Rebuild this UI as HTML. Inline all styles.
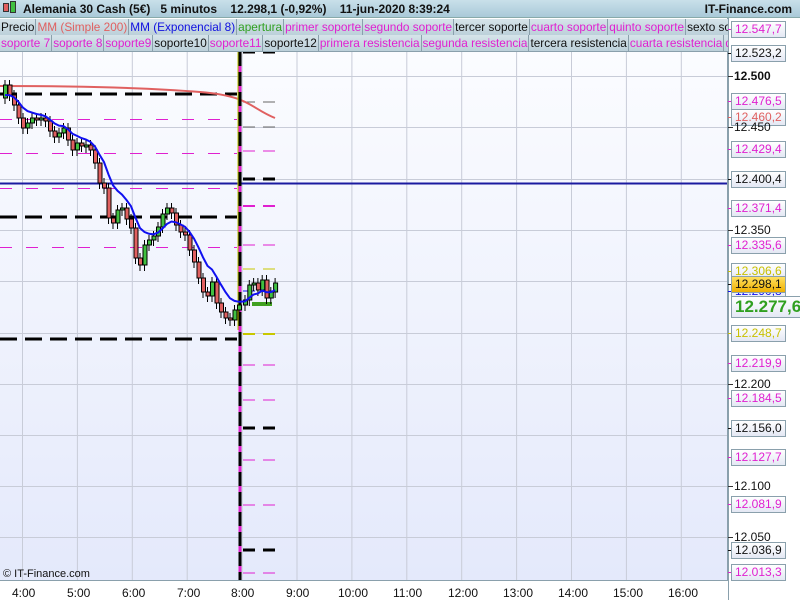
<!DOCTYPE html>
<html><head><meta charset="utf-8"><style>
*{margin:0;padding:0;box-sizing:border-box}
body{width:800px;height:600px;overflow:hidden;font-family:"Liberation Sans",sans-serif;background:#fff;position:relative}
#hdr{position:absolute;left:0;top:0;width:800px;height:18px;background:linear-gradient(#c9e0ea,#a9c9d8);font-weight:bold;font-size:12px;line-height:18px;color:#111;border-bottom:1px solid #8aa}
#hdr span{position:absolute;top:0;white-space:nowrap}
.row{position:absolute;left:0;height:17px;width:730px;background:#c4d6df;display:flex;overflow:hidden}
.row div{font-size:11.8px;line-height:16px;padding:0 1px;border-right:1px solid #8aa0ac;border-bottom:1px solid #8aa0ac;white-space:nowrap;background:linear-gradient(#d6e4ea,#bcd0da);flex-shrink:0}
.m{color:#e020d0}.k{color:#111}
#ax{position:absolute;left:728px;top:18px;width:72px;height:582px;background:#fff;border-left:1px solid #8aa0ac}
.lb{position:absolute;left:731px;height:17px;font-size:12px;line-height:15px;padding:0 3px;border:1px solid #8aa0ac;background:linear-gradient(#fff,#e4e8f4);white-space:nowrap}
.pl{position:absolute;left:734px;font-size:12px;color:#111}
.tk{position:absolute;left:728px;width:5px;height:1px;background:#333}
.t{position:absolute;top:586px;font-size:12px;color:#111}
</style></head><body>
<svg width="800" height="600" style="position:absolute;left:0;top:0">
<defs><linearGradient id="bg" x1="0" y1="0" x2="0" y2="1"><stop offset="0" stop-color="#fbfcff"/><stop offset="1" stop-color="#e4e9fb"/></linearGradient></defs>
<rect x="0" y="52" width="728" height="528" fill="url(#bg)"/>
<g id="grid" stroke="#c8ccd8" stroke-width="1"></g>
<g id="lines"></g>
<path d="M0 86 C80 86 150 88 200 92 S250 108 275 118" stroke="#e06060" stroke-width="2" fill="none"/>
<line x1="0" y1="183.5" x2="728" y2="183.5" stroke="#1a1aa0" stroke-width="2"/>
<line x1="240" y1="52" x2="240" y2="580" stroke="#e020d0" stroke-width="3"/>
<line x1="240" y1="52" x2="240" y2="580" stroke="#000" stroke-width="3" stroke-dasharray="14 6"/>
<line x1="238" y1="52" x2="238" y2="330" stroke="#b8c000" stroke-width="1"/>
<g id="c"></g>
<path id="ema" stroke="#1010f0" stroke-width="2" fill="none"/>
<line x1="727.5" y1="18" x2="727.5" y2="580" stroke="#8aa0ac"/>
<line x1="0" y1="580.5" x2="728" y2="580.5" stroke="#8aa0ac"/>
</svg>
<div id="hdr"><span style="left:3px;top:3px;width:6px;height:9px;background:#e06060;border:1px solid #333"></span><span style="left:10px;top:1px;width:6px;height:12px;background:#40c040;border:1px solid #333"></span><span style="left:23px">Alemania 30 Cash (5€)&nbsp;&nbsp;&nbsp;5 minutos&nbsp;&nbsp;&nbsp;&nbsp;12.298,1 (-0,92%)&nbsp;&nbsp;&nbsp;&nbsp;11-jun-2020 8:39:24</span><span style="right:8px">IT-Finance.com</span></div>
<div class="row" style="top:19px"><div class="k">Precio</div><div style="color:#e06060">MM (Simple 200)</div><div style="color:#1010e0">MM (Exponencial 8)</div><div style="color:#30a020">apertura</div><div class="m">primer soporte</div><div class="m">segundo soporte</div><div class="k">tercer soporte</div><div class="m">cuarto soporte</div><div class="m">quinto soporte</div><div class="k">sexto soporte</div></div>
<div class="row" style="top:35px"><div class="m">soporte 7</div><div class="m">soporte 8</div><div class="m">soporte9</div><div class="k">soporte10</div><div class="m">soporte11</div><div class="k">soporte12</div><div class="m">primera resistencia</div><div class="m">segunda resistencia</div><div class="k">tercera resistencia</div><div class="m">cuarta resistencia</div><div class="m">quinta resistencia</div></div>
<div id="ax" style="top:18px"></div>
<div id="lbl"></div>
<div style="position:absolute;left:3px;top:568px;font-size:11px;color:#111">© IT-Finance.com</div>
<div class="t" style="left:12px">4:00</div><div class="t" style="left:67px">5:00</div><div class="t" style="left:122px">6:00</div><div class="t" style="left:177px">7:00</div><div class="t" style="left:231px">8:00</div><div class="t" style="left:286px">9:00</div><div class="t" style="left:338px">10:00</div><div class="t" style="left:393px">11:00</div><div class="t" style="left:448px">12:00</div><div class="t" style="left:503px">13:00</div><div class="t" style="left:558px">14:00</div><div class="t" style="left:613px">15:00</div><div class="t" style="left:668px">16:00</div>
<script>
var NS="http://www.w3.org/2000/svg";
function el(p,t,a){var e=document.createElementNS(NS,t);for(var k in a)e.setAttribute(k,a[k]);p.appendChild(e);return e}
var g=document.getElementById('grid');
for(var i=0;i<13;i++){var x=22.5+i*54.9;el(g,'line',{x1:x,y1:52,x2:x,y2:580})}
[76,127,179,230,281,333,384,435,486,537].forEach(function(y){el(g,'line',{x1:0,y1:y+.5,x2:728,y2:y+.5})});
var L=document.getElementById('lines');
[94,217,339].forEach(function(y){el(L,'line',{x1:0,y1:y,x2:237,y2:y,stroke:'#000','stroke-width':3,'stroke-dasharray':'17 8'})});
[119,153,188,247].forEach(function(y){el(L,'line',{x1:0,y1:y+.5,x2:237,y2:y+.5,stroke:'#e020d0','stroke-width':1,'stroke-dasharray':'12 14'})});
var segs=[[52,'#000',3],[179,'#000',3],[428,'#000',3],[550,'#000',3],[102,'#666',1],[127,'#666',1],[151,'#e020d0',1],[206,'#e020d0',2],[245,'#e020d0',1],[365,'#e020d0',1],[400,'#e020d0',1],[460,'#e020d0',1],[505,'#e020d0',1],[573,'#e020d0',1],[269,'#c8c800',1],[334,'#c8c800',2],[291,'#1010f0',1]];
segs.forEach(function(s){el(L,'line',{x1:243,y1:s[0],x2:275,y2:s[0],stroke:s[1],'stroke-width':s[2],'stroke-dasharray':'12 8'})});
el(L,'line',{x1:252,y1:304,x2:272,y2:304,stroke:'#40a020','stroke-width':4});
var cl=[98,85,95,105,118,128,123,118,119,118,121,131,137,133,128,140,150,143,146,145,150,163,183,188,218,223,210,208,219,228,258,265,245,240,236,227,214,208,213,225,232,235,250,262,278,292,296,282,303,312,318,320,310,305];
var n=cl.length-1,sp=234/(n-1),C=document.getElementById('c'),pts=[],e=cl[0];
function candle(x,o,c){var top=Math.min(o,c),h=Math.max(2,Math.abs(o-c));el(C,'line',{x1:x+2,y1:top-5,x2:x+2,y2:top+h+6,stroke:'#000'});el(C,'rect',{x:x+.5,y:top,width:4,height:h,fill:c<o?'#40c040':'#e06060',stroke:'#000','stroke-width':1})}
for(var i=1;i<=n;i++){var x=3+(i-1)*sp;candle(x,cl[i-1],cl[i]);e=e+(cl[i]-e)*2/9;pts.push((x+2).toFixed(1)+' '+e.toFixed(1))}
var c2=[305,300,285,283,290,280,298,292,283];
for(var i=1;i<c2.length;i++){var x=243+(i-1)*4.3;candle(x,c2[i-1],c2[i]);e=e+(c2[i]-e)*2/9;pts.push((x+2).toFixed(1)+' '+e.toFixed(1))}
document.getElementById('ema').setAttribute('d','M'+pts.join(' L'));
var lb=document.getElementById('lbl');
var labs=[[29,'12.547,7','#e020d0'],[53,'12.523,2','#111'],[101,'12.476,5','#e020d0'],[117,'12.460,2','#e06060'],[149,'12.429,4','#e020d0'],[179,'12.400,4','#111'],[208,'12.371,4','#e020d0'],[245,'12.335,6','#e020d0'],[271,'12.306,6','#c8c000'],[291,'12.290,8','#1010f0'],[284,'12.298,1','#111','#f8c000'],[333,'12.248,7','#c8c000'],[363,'12.219,9','#e020d0'],[398,'12.184,5','#e020d0'],[428,'12.156,0','#111'],[457,'12.127,7','#e020d0'],[504,'12.081,9','#e020d0'],[550,'12.036,9','#111'],[572,'12.013,3','#e020d0']];
var h='';
labs.forEach(function(l){h+='<div class="tk" style="top:'+l[0]+'px;background:'+l[2]+'"></div><div class="lb" style="top:'+(l[0]-8)+'px;color:'+l[2]+(l[3]?';background:linear-gradient(#ffe060,#f0b000)':'')+'">'+l[1]+'</div>'});
h+='<div class="lb" style="top:296px;height:22px;font-size:17px;line-height:20px;font-weight:bold;color:#30a020">12.277,6</div>';
[[76,'12.500'],[127,'12.450'],[230,'12.350'],[384,'12.200'],[486,'12.100'],[537,'12.050']].forEach(function(l){h+='<div class="tk" style="top:'+l[0]+'px"></div><div class="pl" style="top:'+(l[0]-7)+'px;'+(l[0]==76?'font-weight:bold':'')+'">'+l[1]+'</div>'});
lb.innerHTML=h;
</script>
</body></html>
